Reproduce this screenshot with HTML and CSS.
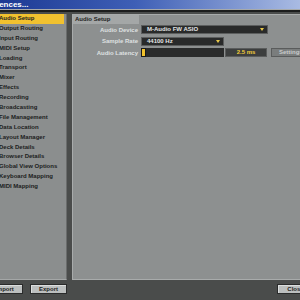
FILE: index.html
```html
<!DOCTYPE html>
<html lang="en">
<head>
  <meta charset="UTF-8" />
  <title>Preferences</title>
  <link rel="stylesheet" href="styles.css">
</head>
<body>
  <div class="window">
    <!-- Title bar -->
    <div class="titlebar"><span class="title">Preferences...</span></div>
    <div class="rule"></div>

    <div class="main">
      <!-- Category list -->
      <ul class="nav">
        <li class="nav-item active">Audio Setup</li>
        <li class="nav-item">Output Routing</li>
        <li class="nav-item">Input Routing</li>
        <li class="nav-item">MIDI Setup</li>
        <li class="nav-item">Loading</li>
        <li class="nav-item">Transport</li>
        <li class="nav-item">Mixer</li>
        <li class="nav-item">Effects</li>
        <li class="nav-item">Recording</li>
        <li class="nav-item">Broadcasting</li>
        <li class="nav-item">File Management</li>
        <li class="nav-item">Data Location</li>
        <li class="nav-item">Layout Manager</li>
        <li class="nav-item">Deck Details</li>
        <li class="nav-item">Browser Details</li>
        <li class="nav-item">Global View Options</li>
        <li class="nav-item">Keyboard Mapping</li>
        <li class="nav-item">MIDI Mapping</li>
      </ul>

      <!-- Settings pane -->
      <section class="pane">
        <div class="pane-head"><span class="pane-tab">Audio Setup</span></div>
        <div class="rows">
          <div class="row">
            <span class="label">Audio Device</span>
            <div class="select device">M-Audio FW ASIO<span class="arrow"></span></div>
          </div>
          <div class="row">
            <span class="label">Sample Rate</span>
            <div class="select rate">44100 Hz<span class="arrow"></span></div>
          </div>
          <div class="row">
            <span class="label">Audio Latency</span>
            <div class="slider"><span class="knob"></span></div>
            <div class="value">2.5 ms</div>
            <div class="btn-dark">Settings</div>
          </div>
        </div>
      </section>
    </div>

    <!-- Bottom buttons -->
    <div class="footer">
      <button class="btn import">Import</button>
      <button class="btn">Export</button>
      <button class="btn close">Close</button>
    </div>
  </div>
</body>
</html>
```

FILE: styles.css
```css
/* Window frame */
body {
  margin: 0;
  font-family: "Liberation Sans", Arial, sans-serif;
  font-weight: bold;
  font-size: 6px;
  overflow: hidden;
}

.window {
  width: 300px;
  height: 300px;
  background-color: #4a4c4b;
  display: flex;
  flex-direction: column;
  overflow: hidden;
}

.titlebar {
  height: 9px;
  background: linear-gradient(90deg, #1d3a94 0%, #3e5fb6 45%, #a9bbe3 100%);
  color: #ffffff;
  font-size: 8px;
  line-height: 9px;
  white-space: nowrap;
  border-bottom: 1px solid #a7aaaa;
}

.title {
  margin-left: -24px;
}

.rule {
  height: 2px;
  background-color: #1c1d1d;
  margin-bottom: 2px;
}

.main {
  display: flex;
  gap: 5px;
  height: 266px;
  padding-right: 2px;
}

/* Category list */
.nav {
  list-style: none;
  margin: 0;
  padding: 0;
  width: 66px;
  flex: none;
  background-color: #8b8e8e;
  border-right: 1px solid #6a6c6c;
  border-bottom: 1px solid #a4a7a7;
}

.nav-item {
  height: 9.9px;
  line-height: 9.9px;
  color: #1c1d1d;
  white-space: nowrap;
  text-indent: -1px;
}

.nav-item.active {
  background-color: #f1c12f;
  margin-right: 2px;
}

/* Settings pane */
.pane {
  flex: 1;
  background-color: #8d9090;
  border-top: 1px solid #a8abab;
  border-left: 1px solid #a8abab;
  border-bottom: 1px solid #a8abab;
}

.pane-head {
  height: 9px;
  display: flex;
}

.pane-tab {
  width: 64px;
  padding-left: 2px;
  background-color: #a4a7a7;
  color: #1c1d1d;
  line-height: 9px;
}

.rows {
  display: flex;
  flex-direction: column;
  gap: 2.5px;
  margin-top: 1px;
}

.row {
  display: flex;
  align-items: center;
  height: 9px;
}

.label {
  width: 65px;
  text-align: right;
  color: #dfe1e1;
  margin-right: 3px;
}

.select {
  position: relative;
  height: 9px;
  padding-left: 5px;
  box-sizing: border-box;
  background-color: #292a2a;
  color: #e4e6e6;
  border: 1px solid #5c5e5e;
  line-height: 7px;
}

.device {
  width: 127px;
}

.rate {
  width: 83px;
}

.arrow {
  position: absolute;
  right: 3px;
  top: 2px;
  width: 0;
  height: 0;
  border-left: 2px solid transparent;
  border-right: 2px solid transparent;
  border-top: 3px solid #e8c84a;
}

.slider {
  position: relative;
  width: 83px;
  height: 9px;
  background-color: #2a2b2b;
}

.knob {
  position: absolute;
  left: 0;
  top: 0;
  width: 3px;
  height: 7px;
  background-color: #f2c22c;
  border: 1px solid #1a1a1a;
}

.value {
  width: 42px;
  height: 9px;
  margin-left: 1px;
  box-sizing: border-box;
  background-color: #3c3e3e;
  border: 1px solid #5a5c5c;
  color: #f0cc3a;
  text-align: center;
  line-height: 7px;
}

.btn-dark {
  width: 40px;
  height: 9px;
  margin-left: 4px;
  box-sizing: border-box;
  background-color: #7a7d7d;
  border: 1px solid #5a5c5c;
  color: #c9cbcb;
  padding-left: 7px;
  line-height: 7px;
  white-space: nowrap;
}

/* Bottom buttons */
.footer {
  display: flex;
  align-items: flex-start;
  gap: 7px;
  padding-top: 4px;
}

.btn {
  width: 37px;
  height: 10px;
  padding: 0;
  font: inherit;
  background-color: #bcbfbf;
  color: #1c1d1d;
  border: 1px solid #2a2b2b;
  box-shadow: inset 1px 1px 0 #dcdede;
}

.import {
  margin-left: -14px;
}

.close {
  margin-left: auto;
  margin-right: -14px;
}
```
